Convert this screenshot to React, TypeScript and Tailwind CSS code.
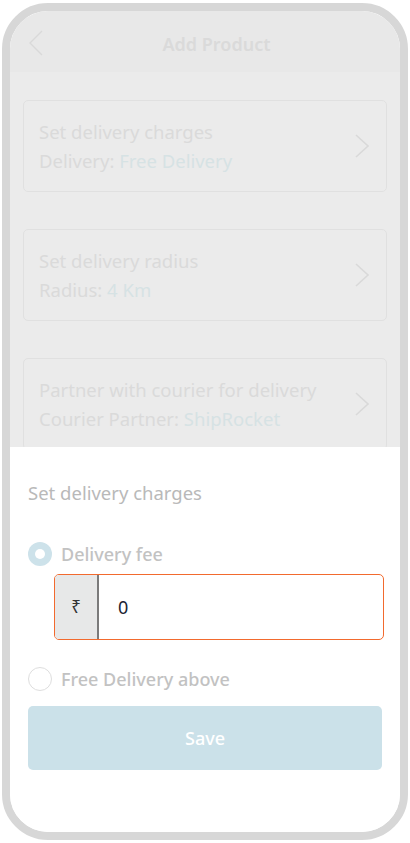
import React from "react";

function Chevron({ className }: { className?: string }) {
  return (
    <svg width="16" height="24" viewBox="0 0 16 24" className={className} fill="none">
      <path d="M2 1 L14 12 L2 23" stroke="#d9d9d9" strokeWidth="1.6" />
    </svg>
  );
}

function Card({ title, label, value }: { title: string; label: string; value: string }) {
  return (
    <div className="mx-[13px] h-[92px] rounded-[5px] border border-[#e0e0e0] flex items-center pl-[15px] pr-[16px] shrink-0">
      <div className="flex-1 flex flex-col gap-[5px] text-[18.5px] leading-[24px] text-[#dadada]">
        <div>{title}</div>
        <div>
          {label} <span className="text-[#d6e2e4]">{value}</span>
        </div>
      </div>
      <Chevron />
    </div>
  );
}

export default function App() {
  return (
    <div className="w-[410px] h-[843px] bg-white" style={{ fontFamily: '"Noto Sans", "Open Sans", sans-serif' }}>
      <div className="ml-[2px] mt-[3px] w-[406px] h-[837px] rounded-[46px] border-[8px] border-[#d7d7d7] overflow-hidden flex flex-col bg-white">
        <div className="h-[61px] bg-[#e8e8e8] flex items-center relative shrink-0 pt-[6px]">
          <svg width="16" height="26" viewBox="0 0 16 26" className="ml-[18px] mb-[4px]" fill="none">
            <path d="M14 1 L2 13 L14 25" stroke="#d9d9d9" strokeWidth="1.4" />
          </svg>
          <div className="flex-1 text-center text-[18px] font-semibold text-[#dadada] mr-[11px]">Add Product</div>
        </div>
        <div className="h-[375px] bg-[#ebebeb] overflow-hidden flex flex-col pt-[28px] gap-[37px] shrink-0">
          <Card title="Set delivery charges" label="Delivery:" value="Free Delivery" />
          <Card title="Set delivery radius" label="Radius:" value="4 Km" />
          <Card title="Partner with courier for delivery" label="Courier Partner:" value="ShipRocket" />
        </div>
        <div className="flex-1 bg-white flex flex-col px-[18px] pt-[34px]">
          <div className="text-[18.5px] leading-[24px] text-[#b9b9b9]">Set delivery charges</div>
          <div className="mt-[37px] flex items-center gap-[9px]">
            <div className="w-[24px] h-[24px] rounded-full bg-[#cde2ea] flex items-center justify-center">
              <div className="w-[10px] h-[10px] rounded-full bg-white" />
            </div>
            <div className="text-[18px] font-medium leading-[24px] text-[#c2c2c2]">Delivery fee</div>
          </div>
          <div className="mt-[8px] ml-[26px] mr-[-2px] h-[66px] rounded-[5px] border-[1.5px] border-[#f26a2e] flex overflow-hidden">
            <div className="w-[44px] bg-[#e7e8e8] border-r-2 border-[#7b7b7b] flex items-center justify-center text-[17px] text-[#333]">₹</div>
            <div className="flex-1 flex items-center pl-[19px] text-[18px] text-[#1b2433]">0</div>
          </div>
          <div className="mt-[27px] flex items-center gap-[9px]">
            <div className="w-[24px] h-[24px] rounded-full border-[1.5px] border-[#dedede]" />
            <div className="text-[18px] font-medium leading-[24px] text-[#c2c2c2]">Free Delivery above</div>
          </div>
          <div className="mt-[15px] h-[64px] rounded-[5px] bg-[#cbe1e9] flex items-center justify-center text-[18px] font-medium text-white">Save</div>
        </div>
      </div>
    </div>
  );
}
